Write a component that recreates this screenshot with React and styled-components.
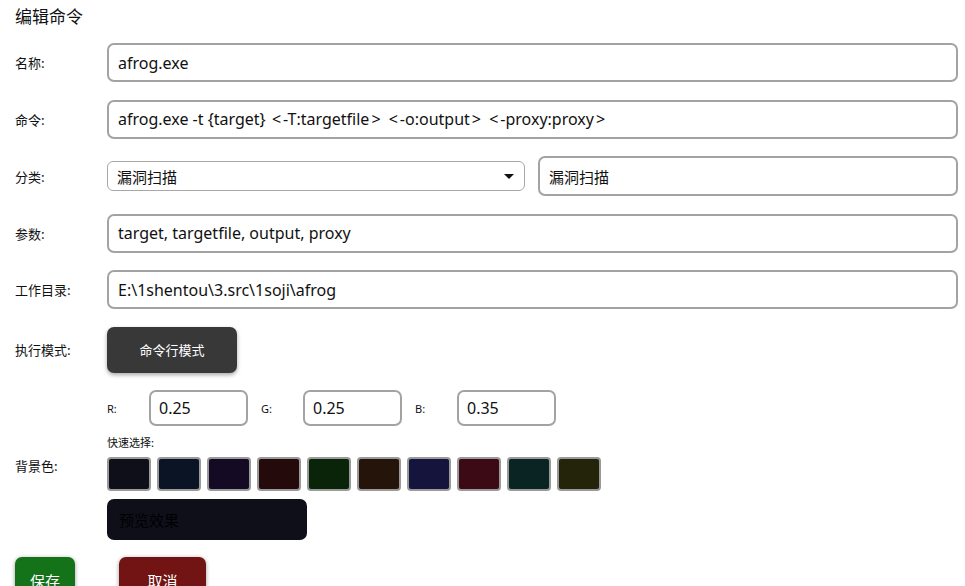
import styled, { createGlobalStyle } from "styled-components";

const GlobalStyle = createGlobalStyle`
  html, body {
    margin: 0;
    padding: 0;
    background: #ffffff;
    overflow: hidden;
  }
  body {
    font-family: "Noto Sans", "Noto Sans CJK SC", sans-serif;
    color: #111;
  }
`;

const Page = styled.div`
  padding: 2px 7px 0 15px;
  height: 586px;
  box-sizing: border-box;
`;

const Title = styled.h1`
  margin: 0;
  font-size: 17px;
  font-weight: 400;
  line-height: 28px;
  font-family: "Noto Sans CJK SC", sans-serif;
`;

const Form = styled.div`
  display: grid;
  grid-template-columns: 92px 1fr;
  row-gap: 17.5px;
  margin-top: 13px;
  align-items: center;
`;

const Label = styled.div`
  font-size: 13px;
  font-family: "Noto Sans CJK SC", sans-serif;
  color: #111;
`;

const TextBox = styled.div`
  height: ${(p) => p.$h || 39}px;
  box-sizing: border-box;
  border: 2px solid #a3a3a3;
  border-radius: 7px;
  padding: 0 9px;
  display: flex;
  align-items: center;
  font-size: 16px;
  color: #111;
  white-space: nowrap;
  overflow: hidden;
  flex: ${(p) => (p.$grow ? 1 : "none")};
`;

const Angle = styled.span`
  margin: 0 2px;
`;

const CjkText = styled.span`
  font-family: "Noto Sans CJK SC", sans-serif;
  font-size: 15px;
`;

const Pair = styled.div`
  display: flex;
  align-items: center;
  gap: 13px;
`;

const Select = styled.div`
  flex: 1;
  height: 30px;
  box-sizing: border-box;
  border: 1px solid #a8a8a8;
  border-radius: 6px;
  padding: 0 9px;
  display: flex;
  align-items: center;
  justify-content: space-between;
  font-size: 15px;
  font-family: "Noto Sans CJK SC", sans-serif;
`;

const Caret = styled.span`
  width: 0;
  height: 0;
  border-left: 5px solid transparent;
  border-right: 5px solid transparent;
  border-top: 5px solid #111;
  margin-right: 1px;
`;

const ModeButton = styled.button`
  width: 130px;
  height: 46px;
  border: 0;
  border-radius: 7px;
  background: #383838;
  color: #fff;
  font-size: 13px;
  font-family: "Noto Sans CJK SC", sans-serif;
  box-shadow: 0 2px 4px rgba(0, 0, 0, 0.35);
  justify-self: start;
`;

const ColorBlock = styled.div`
  display: flex;
  flex-direction: column;
`;

const RgbRow = styled.div`
  display: flex;
  align-items: center;
`;

const RgbLabel = styled.span`
  width: 42px;
  font-size: 11px;
  color: #111;
`;

const RgbBox = styled(TextBox)`
  width: 99px;
  padding: 0 8px;
  margin-right: 13px;
`;

const QuickLabel = styled.div`
  font-size: 11px;
  font-family: "Noto Sans CJK SC", sans-serif;
  margin: 8px 0 7px;
  line-height: 16px;
`;

const Swatches = styled.div`
  display: flex;
  gap: 6px;
`;

const Swatch = styled.div`
  width: 44px;
  height: 34px;
  box-sizing: border-box;
  border: 2px solid #9a9a9a;
  border-radius: 4px;
  background: ${(p) => p.$c};
`;

const Preview = styled.div`
  width: 200px;
  height: 41px;
  margin-top: 8px;
  border-radius: 7px;
  background: #0f0f1a;
  box-sizing: border-box;
  padding-left: 12px;
  display: flex;
  align-items: center;
  font-size: 15px;
  color: #000;
  font-family: "Noto Sans CJK SC", sans-serif;
`;

const Actions = styled.div`
  display: flex;
  gap: 44px;
  margin-top: 17px;
`;

const ActionButton = styled.button`
  width: ${(p) => p.$w}px;
  height: 46px;
  flex: none;
  border: 0;
  border-radius: 7px;
  background: ${(p) => p.$bg};
  color: #fff;
  font-size: 15px;
  font-family: "Noto Sans CJK SC", sans-serif;
  box-shadow: 0 1px 4px rgba(0, 0, 0, 0.4);
`;

const swatchColors = [
  "#0f0f1a",
  "#0a1424",
  "#140a24",
  "#240a0a",
  "#0a240a",
  "#24140a",
  "#14143c",
  "#3c0a14",
  "#0a2424",
  "#24240a",
];

export default function App() {
  return (
    <>
      <GlobalStyle />
      <Page>
        <Title>编辑命令</Title>
        <Form>
          <Label>名称:</Label>
          <TextBox>afrog.exe</TextBox>

          <Label>命令:</Label>
          <TextBox>
            afrog.exe -t {"{target}"}&nbsp;<Angle>&lt;</Angle>-T:targetfile<Angle>&gt;</Angle>&nbsp;<Angle>&lt;</Angle>-o:output<Angle>&gt;</Angle>&nbsp;<Angle>&lt;</Angle>-proxy:proxy<Angle>&gt;</Angle>
          </TextBox>

          <Label>分类:</Label>
          <Pair>
            <Select>
              <span>漏洞扫描</span>
              <Caret />
            </Select>
            <TextBox $grow $h={40}>
              <CjkText>漏洞扫描</CjkText>
            </TextBox>
          </Pair>

          <Label>参数:</Label>
          <TextBox>target, targetfile, output, proxy</TextBox>

          <Label>工作目录:</Label>
          <TextBox>E:\1shentou\3.src\1soji\afrog</TextBox>

          <Label>执行模式:</Label>
          <ModeButton>命令行模式</ModeButton>

          <Label>背景色:</Label>
          <ColorBlock>
            <RgbRow>
              <RgbLabel>R:</RgbLabel>
              <RgbBox $h={36}>0.25</RgbBox>
              <RgbLabel>G:</RgbLabel>
              <RgbBox $h={36}>0.25</RgbBox>
              <RgbLabel>B:</RgbLabel>
              <RgbBox $h={36}>0.35</RgbBox>
            </RgbRow>
            <QuickLabel>快速选择:</QuickLabel>
            <Swatches>
              {swatchColors.map((c) => (
                <Swatch key={c} $c={c} />
              ))}
            </Swatches>
            <Preview>预览效果</Preview>
          </ColorBlock>
        </Form>
        <Actions>
          <ActionButton $w={60} $bg="#147219">保存</ActionButton>
          <ActionButton $w={87} $bg="#721414">取消</ActionButton>
        </Actions>
      </Page>
    </>
  );
}
